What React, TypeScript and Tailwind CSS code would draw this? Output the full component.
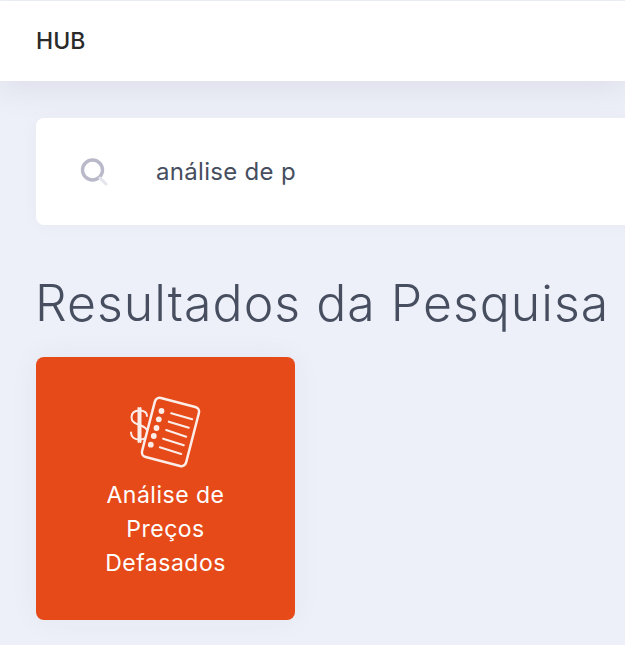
export default function App() {
  return (
    <div className="h-[645px] w-[625px] overflow-hidden bg-[#edf0f8] pt-px font-['Inter',sans-serif]">
      <header className="relative flex h-[80px] items-center bg-white pl-9 shadow-[0_8px_30px_rgba(82,63,105,0.10)]">
        <span className="text-[23px] font-medium text-[#2a2a2a]">HUB</span>
      </header>
      <main className="pl-9">
        <div className="mt-[37px] flex h-[107px] w-[700px] items-center rounded-lg bg-white pl-[44px] shadow-[0_0_20px_rgba(82,63,105,0.03)]">
          <svg width="28" height="28" viewBox="0 0 28 28" fill="none" className="shrink-0">
            <circle cx="12.5" cy="12" r="10" stroke="#b9b9ca" strokeWidth="3.4" />
            <path d="M20 20l6 6" stroke="#e4e4ec" strokeWidth="3" strokeLinecap="round" />
          </svg>
          <span className="ml-[48px] text-[24px] tracking-[0.3px] text-[#464e5f]">análise de p</span>
        </div>
        <h1 className="mt-[45px] -ml-px whitespace-nowrap text-[50px] leading-[66px] font-light tracking-[1px] text-[#464e5f]">Resultados da Pesquisa</h1>
        <div className="mt-[21px] flex h-[263px] w-[259px] flex-col items-center rounded-lg bg-[#e64a19] pt-[38px] shadow-[0_0_30px_rgba(82,63,105,0.05)]">
          <svg width="74" height="74" viewBox="0 0 74 74" fill="none" stroke="white" className="shrink-0 opacity-90">
            <g strokeWidth="2" strokeLinecap="round">
              <path d="M18 21C18 17 15 15.500 10.500 15.500C5 15.500 2.500 18.500 2.500 22.500C2.500 27 6.500 28.500 10.500 30C15.500 31.800 18.500 33.500 18.500 38C18.500 42.500 15 44.500 10.500 44.500C5.500 44.500 2 42 2 37.500" />
              <path d="M9.500 13V47M11.500 13V47" />
            </g>
            <rect x="18.750" y="6.500" width="45.500" height="61" rx="5" strokeWidth="2.500" transform="rotate(14.500 41.500 37)" fill="#e64a19" />
            <g fill="white" stroke="none">
              <circle cx="32.500" cy="16" r="2.900" />
              <circle cx="29.800" cy="24.300" r="2.900" />
              <circle cx="27.500" cy="33" r="2.900" />
              <circle cx="24.800" cy="41" r="2.900" />
              <circle cx="21.800" cy="49.700" r="2.900" />
            </g>
            <path strokeWidth="2.100" strokeLinecap="round" d="M42.200 18.300L63.200 24.300M39.800 26.700L59.800 32.700M37.200 35L57.200 41.700M34.200 43.700L54.800 50.300M30.800 52.300L52.200 59" />
          </svg>
          <div className="mt-[9px] text-center text-[23px] leading-[34px] font-normal tracking-[0.5px] text-white">
            <div>Análise de</div>
            <div>Preços</div>
            <div>Defasados</div>
          </div>
        </div>
      </main>
    </div>
  );
}
